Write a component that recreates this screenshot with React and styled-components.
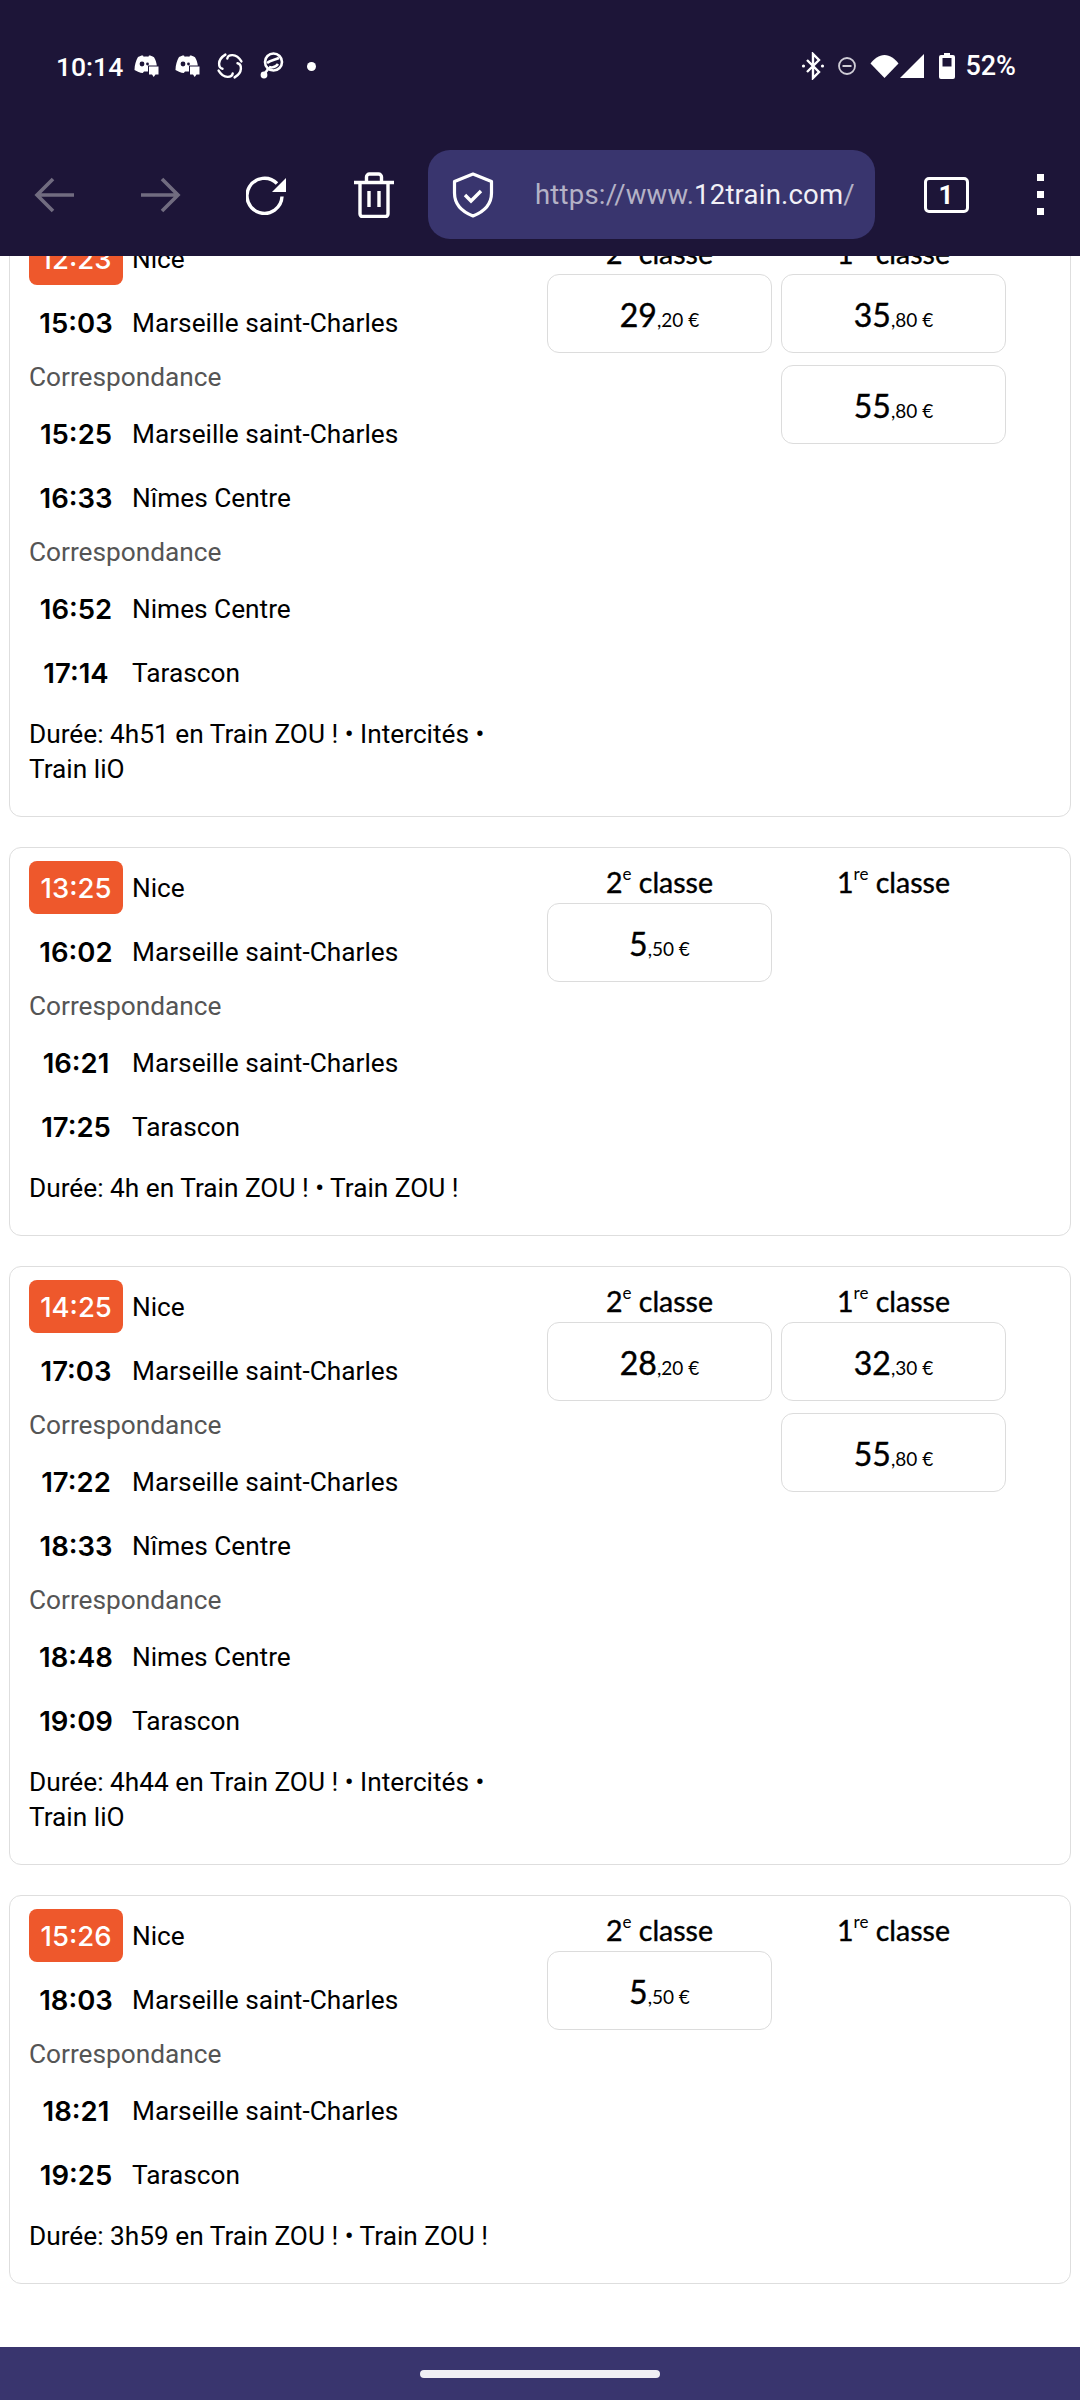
import styled, { createGlobalStyle } from 'styled-components';

const GlobalStyle = createGlobalStyle`
  html, body {
    margin: 0;
    padding: 0;
    background: #fff;
  }
  * {
    box-sizing: border-box;
  }
`;

const trips = [
  {
    id: 1,
    stops: [
      ['12:23', 'Nice'],
      ['15:03', 'Marseille saint-Charles'],
      null,
      ['15:25', 'Marseille saint-Charles'],
      ['16:33', 'Nîmes Centre'],
      null,
      ['16:52', 'Nimes Centre'],
      ['17:14', 'Tarascon'],
    ],
    duration: 'Durée: 4h51 en Train ZOU ! • Intercités • Train liO',
    second: [['29', ',20 €']],
    first: [['35', ',80 €'], ['55', ',80 €']],
  },
  {
    id: 2,
    stops: [
      ['13:25', 'Nice'],
      ['16:02', 'Marseille saint-Charles'],
      null,
      ['16:21', 'Marseille saint-Charles'],
      ['17:25', 'Tarascon'],
    ],
    duration: 'Durée: 4h en Train ZOU ! • Train ZOU !',
    second: [['5', ',50 €']],
    first: [],
  },
  {
    id: 3,
    stops: [
      ['14:25', 'Nice'],
      ['17:03', 'Marseille saint-Charles'],
      null,
      ['17:22', 'Marseille saint-Charles'],
      ['18:33', 'Nîmes Centre'],
      null,
      ['18:48', 'Nimes Centre'],
      ['19:09', 'Tarascon'],
    ],
    duration: 'Durée: 4h44 en Train ZOU ! • Intercités • Train liO',
    second: [['28', ',20 €']],
    first: [['32', ',30 €'], ['55', ',80 €']],
  },
  {
    id: 4,
    stops: [
      ['15:26', 'Nice'],
      ['18:03', 'Marseille saint-Charles'],
      null,
      ['18:21', 'Marseille saint-Charles'],
      ['19:25', 'Tarascon'],
    ],
    duration: 'Durée: 3h59 en Train ZOU ! • Train ZOU !',
    second: [['5', ',50 €']],
    first: [],
  },
];

const DiscordIcon = () => (
  <svg width="26" height="24" viewBox="0 0 26 24" fill="#fff">
    <path d="M5 3C7 1.800 9 1.200 10 1.500l.7 1.200c1.600-.2 3-.2 4.600 0L16 1.500c1.400 0 3.300.6 5 1.700 1.600 2.700 2.500 5.500 2.800 8.300H15v6h-4l-1.200 1.500C7 18.700 4 17.600 1.500 16 1.500 11 3 6.500 5 3z" />
    <circle cx="9" cy="10" r="2.400" fill="#1d1538" />
    <circle cx="14.500" cy="10" r="1.400" fill="#1d1538" />
    <path d="M16 12.500h9.500v8h-3l-1.800 2.500-1.700-2.500h-3z" />
  </svg>
);

const SyncIcon = () => (
  <svg width="30" height="30" viewBox="0 0 30 30" fill="none" stroke="#fff" strokeWidth="2.400" strokeLinecap="round">
    {[0, 90, 180, 270].map((angle) => (
      <path key={angle} d="M12.300 7.500C13 3.500 21 1.500 26.400 10.400" transform={`rotate(${angle} 15 15)`} />
    ))}
  </svg>
);

const ChatIcon = () => (
  <svg width="24" height="30" viewBox="0 0 24 30" fill="none" stroke="#fff" strokeWidth="2.600">
    <circle cx="13.500" cy="11" r="8.500" />
    <path d="M7 12c3-3 8-3 12-5M9 16c3 1 7 0 9-3" />
    <circle cx="4" cy="24" r="3.400" fill="#fff" stroke="none" />
    <path d="M5 22l4-5" />
  </svg>
);

const BluetoothIcon = () => (
  <svg width="24" height="28" viewBox="0 0 24 28" fill="none" stroke="#fff" strokeWidth="2.400">
    <path d="M6 8l12 12-6 6V2l6 6L6 20" />
    <circle cx="2.500" cy="14" r="1.600" fill="#fff" stroke="none" />
    <circle cx="21.500" cy="14" r="1.600" fill="#fff" stroke="none" />
  </svg>
);

const DndIcon = () => (
  <svg width="20" height="20" viewBox="0 0 20 20" fill="none" stroke="#cfcdd6" strokeWidth="1.800">
    <circle cx="10" cy="10" r="8" />
    <path d="M5.500 10h9" strokeWidth="2" />
  </svg>
);

const WifiIcon = () => (
  <svg width="31" height="24" viewBox="0 0 30 24" fill="#fff">
    <path d="M15 24L1 9.500C4.500 5 9.500 1 15 1s10.500 4 14 8.500z" />
  </svg>
);

const SignalIcon = () => (
  <svg width="24" height="24" viewBox="0 0 24 24" fill="#fff">
    <path d="M24 0v24H0z" />
  </svg>
);

const BatteryIcon = () => (
  <svg width="16" height="26" viewBox="0 0 16 26" fill="#fff">
    <path fillRule="evenodd" d="M5 0h6v2h3a2 2 0 0 1 2 2v20a2 2 0 0 1-2 2H2a2 2 0 0 1-2-2V4a2 2 0 0 1 2-2h3zM3.500 5v8.500h9V5z" />
  </svg>
);

const ArrowLeftIcon = () => (
  <svg width="40" height="36" viewBox="0 0 40 36" fill="none" stroke="#716c80" strokeWidth="3.600">
    <path d="M40 18H4M19 2L3 18l16 16" />
  </svg>
);

const ArrowRightIcon = () => (
  <svg width="40" height="36" viewBox="0 0 40 36" fill="none" stroke="#716c80" strokeWidth="3.600">
    <path d="M0 18h36M21 2l16 16-16 16" />
  </svg>
);

const ReloadIcon = () => (
  <svg width="42" height="42" viewBox="0 0 42 42" fill="none">
    <path d="M36 22.500A17.500 17.500 0 1 1 31 9.500" stroke="#fff" strokeWidth="3.400" />
    <path d="M40 4v14H26z" fill="#fff" />
  </svg>
);

const TrashIcon = () => (
  <svg width="40" height="46" viewBox="0 0 40 46" fill="none" stroke="#fff" strokeWidth="3.400">
    <path d="M0 10.500h40M6 11v31a2.500 2.500 0 0 0 2.500 2.500h23A2.500 2.500 0 0 0 34 42V11M12.500 10V5a3 3 0 0 1 3-3h9a3 3 0 0 1 3 3v5M15 19v16M25 19v16" />
  </svg>
);

const ShieldIcon = () => (
  <svg width="42" height="46" viewBox="0 0 42 46" fill="none" stroke="#fff">
    <path d="M21 2L39.500 9.500V21c0 10.500-7 18.500-18.500 23C9.500 39.500 2.500 31.500 2.500 21V9.500z" strokeWidth="3.200" strokeLinejoin="round" />
    <path d="M13 23l6 6 10-10" strokeWidth="3.400" />
  </svg>
);

const App = () => (
  <Screen>
    <GlobalStyle />
    <Header>
      <StatusBar>
        <StatusLeft>
          <Clock>10:14</Clock>
          <DiscordIcon />
          <DiscordIcon />
          <SyncIcon />
          <ChatIcon />
          <Dot />
        </StatusLeft>
        <StatusRight>
          <BluetoothIcon />
          <DndIcon />
          <SignalGroup>
            <WifiIcon />
            <SignalIcon />
          </SignalGroup>
          <BatteryGroup>
            <BatteryIcon />
            <BatteryText>52%</BatteryText>
          </BatteryGroup>
        </StatusRight>
      </StatusBar>
      <Toolbar>
        <ToolSlot $width={107}>
          <ArrowLeftIcon />
        </ToolSlot>
        <ToolSlot $width={107}>
          <ArrowRightIcon />
        </ToolSlot>
        <ToolSlot $width={106}>
          <ReloadIcon />
        </ToolSlot>
        <ToolSlot $width={108}>
          <TrashIcon />
        </ToolSlot>
        <UrlBar>
          <ShieldIcon />
          <UrlText>
            https://www.<strong>12train.com</strong>/
          </UrlText>
        </UrlBar>
        <ToolSlot $width={142}>
          <TabCount>1</TabCount>
        </ToolSlot>
        <MenuSlot>
          <MenuDot />
          <MenuDot />
          <MenuDot />
        </MenuSlot>
      </Toolbar>
    </Header>

    <Content>
      <TripList>
        {trips.map((trip) => (
          <TripCard key={trip.id}>
            <Details>
              {trip.stops.map((stop, i) =>
                stop ? (
                  <Stop key={i} $departure={i === 0}>
                    <Time $departure={i === 0}>{stop[0]}</Time>
                    <Station>{stop[1]}</Station>
                  </Stop>
                ) : (
                  <Connection key={i}>Correspondance</Connection>
                )
              )}
              <Duration>{trip.duration}</Duration>
            </Details>
            <Fares>
              <FareColumn>
                <ClassTitle>
                  2<sup>e</sup> classe
                </ClassTitle>
                {trip.second.map((price) => (
                  <PriceButton key={price.join('')}>
                    <strong>{price[0]}</strong>
                    {price[1]}
                  </PriceButton>
                ))}
              </FareColumn>
              <FareColumn>
                <ClassTitle>
                  1<sup>re</sup> classe
                </ClassTitle>
                {trip.first.map((price) => (
                  <PriceButton key={price.join('')}>
                    <strong>{price[0]}</strong>
                    {price[1]}
                  </PriceButton>
                ))}
              </FareColumn>
            </Fares>
          </TripCard>
        ))}
      </TripList>
    </Content>

    <NavBar>
      <HomeHandle />
    </NavBar>
  </Screen>
);

const Screen = styled.div`
  width: 1080px;
  height: 2400px;
  display: flex;
  flex-direction: column;
  overflow: hidden;
  background: #fff;
  font-family: Roboto, sans-serif;
`;

const Header = styled.header`
  flex: none;
  height: 256px;
  background: #1d1538;
  position: relative;
  z-index: 1;
`;

const StatusBar = styled.div`
  height: 132px;
  padding: 0 64px 0 56px;
  display: flex;
  align-items: center;
  justify-content: space-between;
`;

const StatusLeft = styled.div`
  display: flex;
  align-items: center;
  gap: 15px;
`;

const Clock = styled.span`
  width: 71px;
  color: #fff;
  font-size: 26.5px;
  font-weight: 500;
  margin-right: -9px;
`;

const Dot = styled.span`
  width: 9px;
  height: 9px;
  margin-left: 8px;
  border-radius: 50%;
  background: #fff;
`;

const StatusRight = styled.div`
  display: flex;
  align-items: center;
  gap: 12px;
`;

const SignalGroup = styled.div`
  display: flex;
  align-items: center;
  margin-right: 3px;
`;

const BatteryGroup = styled.div`
  display: flex;
  align-items: center;
  gap: 10px;
`;

const BatteryText = styled.span`
  color: #fff;
  font-size: 27px;
  font-weight: 500;
`;

const Toolbar = styled.div`
  margin-top: 18px;
  height: 89px;
  display: flex;
  align-items: center;
`;

const ToolSlot = styled.div`
  flex: none;
  width: ${(props) => props.$width}px;
  display: flex;
  align-items: center;
  justify-content: center;
`;

const UrlBar = styled.div`
  flex: none;
  width: 447px;
  height: 89px;
  padding-left: 24px;
  display: flex;
  align-items: center;
  gap: 41px;
  border-radius: 22px;
  background: #39356e;
`;

const UrlText = styled.span`
  color: #b4b2c6;
  font-size: 27.5px;
  letter-spacing: 0.2px;
  white-space: nowrap;

  strong {
    color: #f1f0f6;
    font-weight: 400;
  }
`;

const TabCount = styled.span`
  width: 45px;
  height: 36px;
  display: flex;
  align-items: center;
  justify-content: center;
  border: 3px solid #fff;
  border-radius: 5px;
  color: #fff;
  font-size: 26px;
  font-weight: 700;
`;

const MenuSlot = styled.div`
  flex: 1;
  display: flex;
  flex-direction: column;
  align-items: center;
  gap: 10px;
  padding-right: 16px;
`;

const MenuDot = styled.span`
  width: 7px;
  height: 7px;
  background: #fff;
`;

const Content = styled.main`
  flex: 1;
  min-height: 0;
  overflow: hidden;
`;

const TripList = styled.div`
  margin-top: -38px;
  padding: 0 9px;
  display: flex;
  flex-direction: column;
  gap: 30px;
`;

const TripCard = styled.article`
  display: flex;
  padding: 13px 0 29px 19px;
  border: 1px solid #dedede;
  border-radius: 12px;
  background: #fff;
`;

const Details = styled.div`
  flex: none;
  width: 500px;
`;

const Stop = styled.div`
  display: flex;
  align-items: center;
  height: ${(props) => (props.$departure ? '53px' : '64px')};
  margin-bottom: ${(props) => (props.$departure ? '6px' : '0')};
`;

const Time = styled.span`
  flex: none;
  width: 94px;
  height: 53px;
  margin-right: 9px;
  display: flex;
  align-items: center;
  justify-content: center;
  border-radius: 8px;
  background: ${(props) => (props.$departure ? '#ee582c' : 'transparent')};
  color: ${(props) => (props.$departure ? '#fff' : '#000')};
  font-family: Inter, sans-serif;
  font-size: 27.5px;
  font-weight: ${(props) => (props.$departure ? 500 : 600)};
`;

const Station = styled.span`
  color: #000;
  font-size: 26.25px;
`;

const Connection = styled.div`
  height: 47px;
  padding-bottom: 3px;
  display: flex;
  align-items: center;
  color: #555;
  font-size: 26.25px;
`;

const Duration = styled.p`
  margin: 12px 0 0;
  color: #000;
  font-size: 26.25px;
  line-height: 35px;
`;

const Fares = styled.div`
  margin-left: 18px;
  display: flex;
  gap: 9px;
`;

const FareColumn = styled.div`
  flex: none;
  width: 225px;
  display: flex;
  flex-direction: column;
  gap: 12px;
`;

const ClassTitle = styled.h3`
  margin: -1px 0 -12px;
  height: 43px;
  display: flex;
  align-items: center;
  justify-content: center;
  color: #000;
  font-family: Lato, sans-serif;
  font-size: 28.5px;
  font-weight: 400;
  -webkit-text-stroke: 0.4px #000;
  white-space: pre;

  sup {
    align-self: flex-start;
    margin-top: 5px;
    font-size: 17px;
    line-height: 1;
    -webkit-text-stroke: 0;
  }
`;

const PriceButton = styled.div`
  height: 79px;
  display: flex;
  align-items: baseline;
  justify-content: center;
  padding-top: 20px;
  border: 1px solid #dcdcdc;
  border-radius: 12px;
  color: #000;
  font-family: Lato, sans-serif;
  font-size: 19px;

  strong {
    font-size: 32px;
    font-weight: 400;
    -webkit-text-stroke: 0.4px #000;
  }
`;

const NavBar = styled.div`
  flex: none;
  height: 53px;
  display: flex;
  align-items: center;
  justify-content: center;
  background: #39356e;
`;

const HomeHandle = styled.span`
  width: 240px;
  height: 8px;
  border-radius: 4px;
  background: #f0eff5;
`;

export default App;
